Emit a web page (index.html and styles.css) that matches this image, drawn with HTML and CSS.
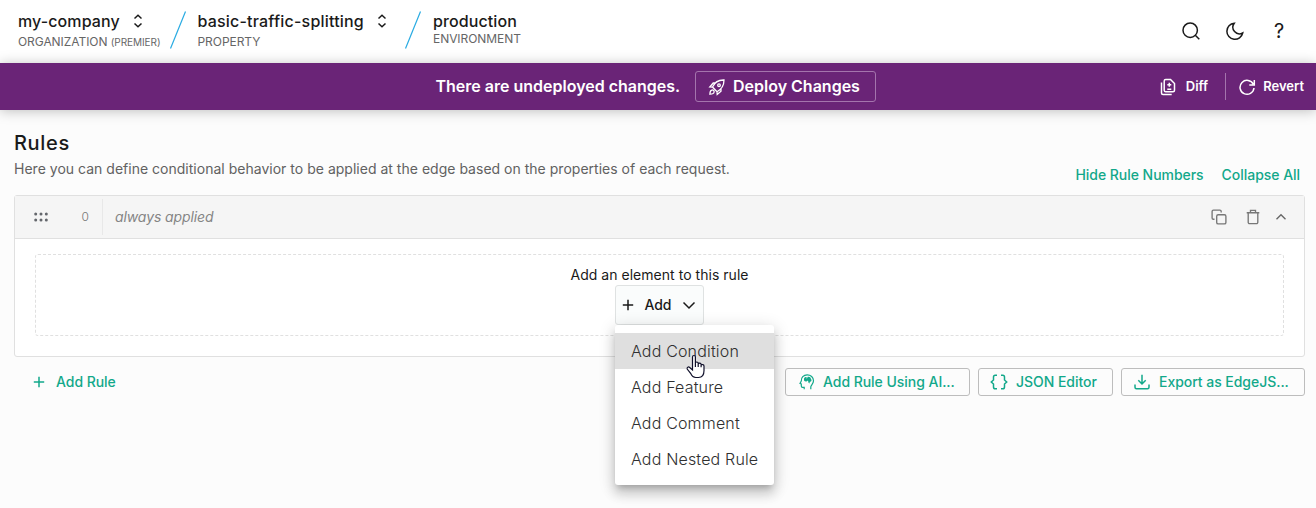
FILE: index.html
```html
<!DOCTYPE html>
<html lang="en">
<head>
<meta charset="utf-8">
<title>Rules</title>
<link rel="stylesheet" href="styles.css">
</head>
<body>
<header class="topbar">
  <nav class="crumbs">
    <div class="crumb crumb-org">
      <div class="crumb-name"><span class="t-org">my-company</span>
        <svg class="sort" width="10" height="14" viewBox="0 0 10 14"><path d="M1.5 4.5 5 1.2 8.5 4.500M1.500 9.500 5 12.800 8.500 9.500"/></svg></div>
      <div class="crumb-kind">ORGANIZATION <small>(PREMIER)</small></div>
    </div>
    <svg class="slash" width="18" height="40" viewBox="0 0 18 40"><path d="M1.500 38.500 16.500 1.500"/></svg>
    <div class="crumb crumb-prop">
      <div class="crumb-name"><span class="t-prop">basic-traffic-splitting</span>
        <svg class="sort" width="10" height="14" viewBox="0 0 10 14"><path d="M1.5 4.5 5 1.2 8.5 4.500M1.500 9.500 5 12.800 8.500 9.500"/></svg></div>
      <div class="crumb-kind">PROPERTY</div>
    </div>
    <svg class="slash" width="18" height="40" viewBox="0 0 18 40"><path d="M1.500 38.500 16.500 1.500"/></svg>
    <div class="crumb crumb-env">
      <div class="crumb-name"><span>production</span></div>
      <div class="crumb-kind">ENVIRONMENT</div>
    </div>
  </nav>
  <div class="tools">
    <svg width="20" height="20" viewBox="0 0 20 20"><circle cx="9.200" cy="9.200" r="7.200"/><path d="m14.300 14.300 4 4"/></svg>
    <svg width="20" height="20" viewBox="0 0 20 20"><path d="M9.200 2.300A8 8 0 1 0 17.700 12 6.600 6.600 0 0 1 9.200 2.300Z"/></svg>
    <span class="help">?</span>
  </div>
</header>
<section class="banner">
  <span class="banner-text">There are undeployed changes.</span>
  <button class="deploy">
    <svg width="18" height="18" viewBox="0 0 18 18"><path d="M4.500 9C6.500 4.500 10 1.800 16 2c0 5.500-2.800 9.500-7 11.800ZM7.500 5H5.200L1.800 9l2.700.2M13 10.500v2.700L9.200 16.500 9 13.800"/><circle cx="11" cy="7.200" r="1.300"/><path d="M4.200 12c-1.600.2-2.200 1.700-2.300 4.200 2.500-.1 4-.7 4.200-2.200.2-1.200-.7-2.200-1.900-2Z"/></svg>
    <span>Deploy Changes</span>
  </button>
  <div class="banner-actions">
    <button class="plain diff">
      <svg width="16" height="18" viewBox="0 0 16 18"><path d="M5.700 1.500h4.800l4 4v6.800q0 1.500-1.500 1.500H5.700q-1.500 0-1.500-1.500V3q0-1.500 1.500-1.500ZM1.500 4.500V15q0 1.500 1.500 1.500h8.700M9.300 4.800v4M7.300 6.800h4M7.300 11.200h4"/></svg>
      <span>Diff</span></button>
    <button class="plain revert">
      <svg width="18" height="18" viewBox="0 0 18 18"><path d="M15.300 6.200A7 7 0 1 0 16 10M16.300 2v5h-5"/></svg>
      <span>Revert</span></button>
  </div>
</section>
<main class="page">
  <div class="heading">
    <div>
      <h1>Rules</h1>
      <p class="desc">Here you can define conditional behavior to be applied at the edge based on the properties of each request.</p>
    </div>
    <div class="links"><a class="l-hide">Hide Rule Numbers</a><a class="l-collapse">Collapse All</a></div>
  </div>
  <section class="rule">
    <div class="rule-head">
      <svg class="grip" width="14" height="10" viewBox="0 0 14 10"><circle cx="1.700" cy="2" r="1.500"/><circle cx="7" cy="2" r="1.500"/><circle cx="12.300" cy="2" r="1.500"/><circle cx="1.700" cy="8" r="1.500"/><circle cx="7" cy="8" r="1.500"/><circle cx="12.300" cy="8" r="1.500"/></svg>
      <span class="num">0</span>
      <span class="applied">always applied</span>
      <div class="rule-tools">
        <svg width="16" height="16" viewBox="0 0 16 16"><rect x="5.700" y="5.700" width="9.200" height="9.200" rx="1.500"/><path d="M3.500 10.200H2.400A1.300 1.300 0 0 1 1.100 8.900V2.400A1.300 1.300 0 0 1 2.400 1.100h6.500a1.300 1.300 0 0 1 1.300 1.300v1"/></svg>
        <svg class="trash" width="14" height="16" viewBox="0 0 14 16"><path d="M.7 3.700h12.600M2.200 3.700v9.600a1.300 1.300 0 0 0 1.300 1.300h7a1.300 1.300 0 0 0 1.300-1.300V3.700M4.500 3.700V1.300h5v2.400"/></svg>
        <svg class="up" width="12" height="8" viewBox="0 0 12 8"><path d="m1.500 6.200 4.500-4.500 4.500 4.500"/></svg>
      </div>
    </div>
    <div class="rule-body">
      <div class="drop">
        <span class="hint">Add an element to this rule</span>
        <div class="add-wrap">
          <button class="add">
            <svg width="12" height="12" viewBox="0 0 12 12"><path d="M6 .8v10.400M.8 6h10.400"/></svg>
            <span>Add</span>
            <svg class="down" width="14" height="9" viewBox="0 0 14 9"><path d="m1.500 1.500 5.500 5.500 5.500-5.500"/></svg>
          </button>
          <ul class="menu">
            <li class="active"><span>Add Condition</span>
              <svg class="cursor" width="20" height="25" viewBox="0 0 20 25"><path d="M6.500 16V3c0-2 2.900-2 2.900 0v6.200c0-1.600 2.800-1.600 2.800.1v.8c.2-1.400 2.900-1.300 2.900.3v.9c.3-1.200 2.900-1 2.900.6v4.600c0 4-2 7-5.500 7H9.800c-2.700 0-4.100-1.700-5.200-4.200L1.200 15c-.5-1.800 1.200-2.600 2.500-1.500ZM9.400 9v4M12.200 9.700V13M15.100 11v2.300"/></svg>
            </li>
            <li><span>Add Feature</span></li>
            <li><span>Add Comment</span></li>
            <li><span>Add Nested Rule</span></li>
          </ul>
        </div>
      </div>
    </div>
  </section>
  <div class="footer">
    <button class="plain add-rule">
      <svg width="12" height="12" viewBox="0 0 12 12"><path d="M6 .8v10.400M.8 6h10.400"/></svg>
      <span>Add Rule</span></button>
    <div class="exports">
      <button class="outline b-ai">
        <svg width="16" height="16" viewBox="0 0 16 16"><path class="thin" d="M5.200 15.300v-2H3.500c-1 0-1.200-.5-1.200-1.300V10L1 9.500 2.300 7C2 3.500 4.500.8 8.200.8c3.500 0 6.300 2.400 6.300 6 0 3-2.500 4-2.700 6v2.500"/><path class="brain" d="M5 5.500C4.700 4 6 2.500 7.500 3l.3 2 .9-2.200c2-.4 3.400.7 3.200 2.200 1.300 1 .5 3-1 2.800l-.5 1.800-.9-.8-.5-2.200-1.600.8C5.900 7.600 4.800 7 5 5.500Z"/></svg>
        <span>Add Rule Using AI...</span></button>
      <button class="outline b-json">
        <svg width="18" height="16" viewBox="0 0 18 16"><path d="M7 1.200H5.200Q3.500 1.200 3.500 3v3L1.300 8l2.200 2v3q0 1.800 1.700 1.800H7M11 1.200h1.800q1.700 0 1.700 1.800v3l2.200 2-2.200 2v3q0 1.800-1.700 1.800H11"/></svg>
        <span>JSON Editor</span></button>
      <button class="outline b-export">
        <svg width="16" height="16" viewBox="0 0 16 16"><path d="M8 .8v9M4.300 6.300 8 10l3.700-3.700M1 10.500v2.800Q1 14.800 2.500 14.800h11q1.500 0 1.500-1.500v-2.800"/></svg>
        <span>Export as EdgeJS...</span></button>
    </div>
  </div>
</main>
</body>
</html>
```
FILE: styles.css
```css
* { box-sizing: border-box; }
body {
  margin: 0;
  height: 508px;
  overflow: hidden;
  background: #fcfcfc;
  color: #1a1a1a;
  font-family: Inter, "Liberation Sans", sans-serif;
  font-size: 14px;
  white-space: nowrap;
}
svg { display: block; flex: none; fill: none; stroke: currentColor; stroke-width: 1.5; }
button { font: inherit; color: inherit; background: none; border: 0; padding: 0; display: flex; align-items: center; }
.topbar { height: 63px; background: #fff; display: flex; justify-content: space-between; }
.crumbs { display: flex; padding: 10px 0 0 18px; }
.crumb-org { width: 151px; }
.crumb-prop { width: 206px; margin-left: 10.5px; }
.crumb-env { margin-left: 11.5px; }
.crumb-name { display: flex; align-items: center; height: 22px; font-size: 16px; font-weight: 500; gap: 13px; }
.t-org { width: 102px; letter-spacing: .1px; }
.t-prop { width: 166px; letter-spacing: .2px; }
.crumb-env .crumb-name { letter-spacing: .1px; }
.crumb-kind { font-size: 12px; line-height: 19px; color: #666; letter-spacing: -.06px; }
.crumb-env .crumb-kind { line-height: 14px; }
.crumb-kind small { font-size: 10px; }
.slash { color: #29abe2; stroke-width: 1.2; }
.tools { display: flex; gap: 24px; align-items: center; padding: 0 28px 1px 0; }
.tools svg { margin-left: -1px; margin-right: 1px; }
.help { width: 18px; text-align: center; font-size: 20px; line-height: 20px; }
.banner {
  height: 47px;
  background: #6a2477;
  color: #fff;
  box-shadow: 0 1px 12px rgba(0, 0, 0, .25);
  display: flex;
  align-items: center;
  padding: 0 12px 0 435.5px;
  font-weight: 600;
}
.banner-text { font-size: 16px; width: 259.5px; padding-bottom: 1px; }
.deploy { width: 181px; height: 31px; border: 1px solid #a474ad; border-radius: 3px; padding-left: 12px; gap: 7px; font-size: 16px; }
.deploy svg { stroke-width: 1.3; }
.deploy span, .banner-actions span { padding-bottom: 1px; }
.banner-actions { margin-left: auto; display: flex; font-size: 13px; }
.diff { height: 27px; gap: 10px; padding-right: 17px; border-right: 1px solid #a474ad; }
.revert { gap: 7px; padding-left: 12px; }
.page { padding: 0 11px 0 14px; }
.heading { height: 85px; display: flex; justify-content: space-between; }
h1 { margin: 19px 0 0; font-size: 20px; line-height: 28px; font-weight: 500; letter-spacing: .65px; }
.desc { margin: 2px 0 0; line-height: 20px; color: #616161; letter-spacing: .014px; }
.links { display: flex; gap: 18px; padding: 55px 5px 0 0; line-height: 20px; font-weight: 500; letter-spacing: -.04px; color: #12a88a; }
.rule { height: 162px; border: 1px solid #e0e0e0; border-radius: 3px; background: #fff; }
.rule-head { height: 43px; background: #f5f5f5; border-bottom: 1px solid #e0e0e0; display: flex; align-items: center; padding: 0 18px 0 19px; }
.grip { fill: #64676c; stroke: none; }
.num { width: 55px; height: 36px; line-height: 36px; padding-right: 13px; text-align: right; font-size: 12px; font-weight: 300; color: #777; border-right: 1px solid #e8e8e8; }
.applied { margin-left: 12px; padding-bottom: 1px; font-style: italic; color: #858585; letter-spacing: -.11px; }
.rule-tools { margin-left: auto; display: flex; align-items: center; color: #777; }
.trash { margin-left: 19px; }
.up { margin-left: 15px; margin-right: -1px; color: #666; }
.rule-tools svg { stroke-width: 1.35; }
.rule-body { padding: 15px 20px 0; }
.drop { height: 82px; border: 1px dashed #e0e0e0; border-radius: 3px; display: flex; flex-direction: column; align-items: center; padding-top: 10px; }
.hint { line-height: 20px; letter-spacing: .03px; }
.add-wrap { position: relative; }
.add { width: 89px; height: 40px; background: #fafcfc; border: 1px solid #dfe2e2; border-radius: 3px; padding-left: 6px; gap: 10px; font-weight: 500; }
.add span { width: 28px; padding-bottom: 1px; letter-spacing: -.1px; }
.menu {
  position: absolute;
  z-index: 2;
  top: 40px;
  left: 0;
  width: 159px;
  height: 160px;
  margin: 0;
  padding: 8px 0;
  list-style: none;
  background: #fff;
  border-radius: 3px;
  box-shadow: 0 5px 6px -3px rgba(0,0,0,.2), 0 9px 12px 1px rgba(0,0,0,.14), 0 3px 16px 2px rgba(0,0,0,.12);
  font-size: 16px;
  font-weight: 300;
  letter-spacing: .17px;
  color: #303030;
}
.menu li { position: relative; height: 36px; line-height: 36px; padding-left: 16px; }
.menu .active { background: #dfdfdf; }
.cursor { position: absolute; z-index: 3; left: 71px; top: 21px; fill: #fff; stroke: #10102a; stroke-width: 1.2; }
.footer { display: flex; justify-content: space-between; margin-top: 11px; color: #12a88a; font-weight: 500; letter-spacing: -.04px; }
.footer span { padding-bottom: 1px; }
.add-rule { height: 28px; gap: 11px; padding-left: 19px; letter-spacing: -.04px; }
.exports { display: flex; gap: 8px; }
.outline { height: 28px; border: 1px solid #bdbdbd; border-radius: 3px; padding-left: 13px; gap: 8px; letter-spacing: -.04px; }
.b-ai { width: 185px; }
.b-json { width: 135px; padding-left: 11px; gap: 8px; }
.b-export { width: 184px; padding-left: 12px; gap: 9px; }
.thin { stroke-width: 1.200; }
.brain { fill: currentColor; stroke: none; }
```
